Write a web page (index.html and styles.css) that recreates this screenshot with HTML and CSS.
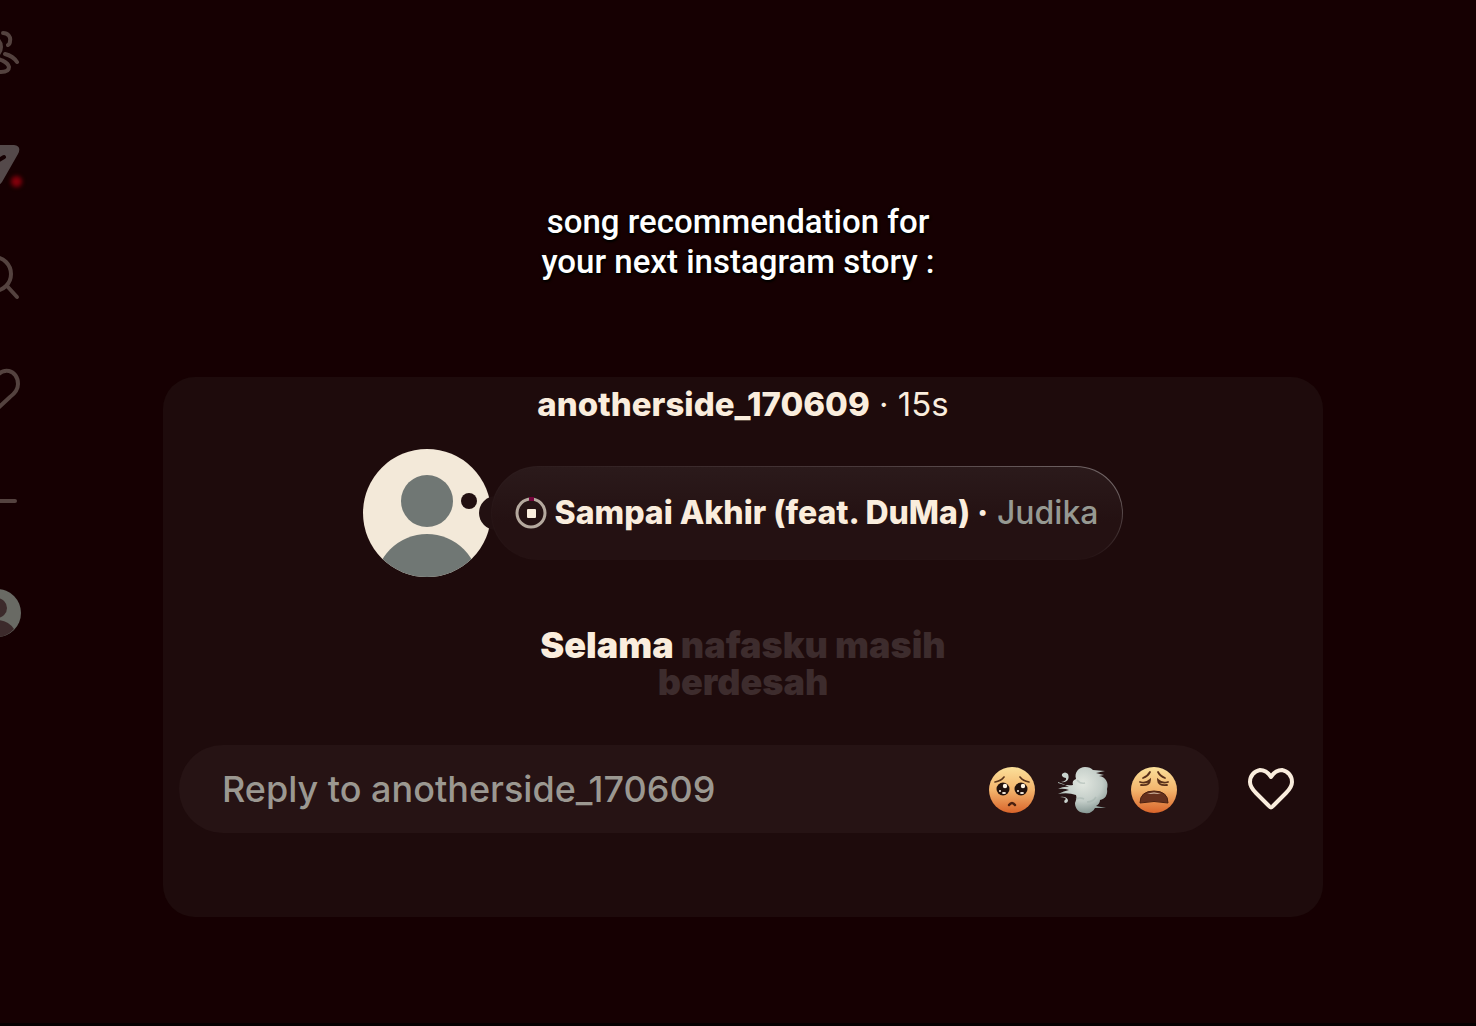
FILE: index.html
```
<!DOCTYPE html>
<html lang="en">

<head>
    <meta charset="UTF-8">
    <meta name="viewport" content="width=device-width, initial-scale=1.0">
    <title>Story</title>
    <link rel="stylesheet" href="styles.css">
</head>

<body>
    <nav class="rail">
        <a href="#" class="rail-link" aria-label="Friends">
            <svg viewBox="0 0 48 48" class="line-icon">
                <circle cx="18" cy="19" r="10" />
                <path d="M30 5c5 0 8 4 7 8q0 3-2 4M32 26q8 2 12 8M3 40c3-7 9-10 15-10 8 0 17 4 18 9 0 5-5 5-8 5H8c-4 0-6-1-5-4Z" />
            </svg>
        </a>
        <a href="#" class="rail-link" aria-label="Messages">
            <svg viewBox="0 0 48 48">
                <path class="plane" d="M7 5h34q8 1 4 9L29 42q-4 6-7-1l-4-15L4 13Q0 6 7 5Z" />
                <path class="plane-fold" d="M18 25l13-8" />
            </svg>
            <span class="dot"></span>
        </a>
        <a href="#" class="rail-link" aria-label="Search">
            <svg viewBox="0 0 48 48" class="line-icon">
                <circle cx="21" cy="22" r="17" />
                <path d="M34 34l10 11" />
            </svg>
        </a>
        <a href="#" class="rail-link" aria-label="Likes">
            <svg viewBox="0 0 48 48" class="line-icon">
                <path d="M24 12C20 7 16 6 12 7 5 8 1 14 2 21c1 6 5 9 9 13l13 11 13-12c4-3 8-7 8-13 0-7-4-12-9-13-5-1-9 1-12 5Z" />
            </svg>
        </a>
        <a href="#" class="rail-link" aria-label="Menu">
            <svg viewBox="0 0 48 48" class="line-icon">
                <path d="M7 25h35" />
            </svg>
        </a>
        <a href="#" class="rail-link" aria-label="Profile">
            <svg viewBox="0 0 48 48">
                <circle class="mini-bg" cx="24" cy="25" r="24" />
                <circle class="mini-fg" cx="24" cy="20" r="10" />
                <path class="mini-fg" d="M6 41q7-9 18-9t17 9q-7 8-17 8T6 41Z" />
            </svg>
        </a>
    </nav>

    <main class="story">
        <h1 class="caption">song recommendation for<br>your next instagram story :</h1>

        <section class="card">
            <p class="author"><strong>anotherside_170609</strong> · 15s</p>

            <div class="music">
                <svg class="avatar" viewBox="0 0 128 128">
                    <clipPath id="round">
                        <circle cx="64" cy="64" r="64" />
                    </clipPath>
                    <g clip-path="url(#round)">
                        <rect class="avatar-bg" width="128" height="128" />
                        <circle class="avatar-fg" cx="64" cy="52" r="26" />
                        <circle class="avatar-fg" cx="64" cy="137" r="52" />
                    </g>
                    <circle class="bubble" cx="106" cy="52" r="8" />
                    <circle class="bubble" cx="133" cy="64" r="17" />
                </svg>
                <div class="track">
                    <svg class="disc" viewBox="0 0 32 32">
                        <circle class="disc-ring" cx="16" cy="16" r="14" />
                        <path class="disc-mark" d="M14 2h5" />
                        <rect class="disc-stop" x="12" y="12" width="9" height="9" rx="1" />
                    </svg>
                    <p class="track-name"><strong>Sampai Akhir (feat. DuMa) ·</strong> Judika</p>
                </div>
            </div>

            <p class="lyrics"><span class="sung">Selama</span> nafasku masih<br>berdesah</p>

            <form class="reply">
                <div class="reply-box">
                    <input type="text" class="reply-input" aria-label="Reply" placeholder="Reply to anotherside_170609">
                    <button type="button" class="emoji" aria-label="Pleading face">
                        <svg viewBox="0 0 48 48">
                            <defs>
                                <linearGradient id="face" x1="0" y1="0" x2="0" y2="1">
                                    <stop offset="0" stop-color="#fbe09a" />
                                    <stop offset=".5" stop-color="#f3b46c" />
                                    <stop offset="1" stop-color="#d9642a" />
                                </linearGradient>
                            </defs>
                            <circle cx="24" cy="25" r="23" fill="url(#face)" />
                            <circle cx="15" cy="24" r="6.5" fill="#20110d" />
                            <circle cx="33" cy="24" r="6.5" fill="#20110d" />
                            <g fill="#fff6e6">
                                <circle cx="17" cy="21" r="2.2" />
                                <circle cx="35" cy="21" r="2.2" />
                                <circle cx="12" cy="26" r="1" />
                                <circle cx="30" cy="26" r="1" />
                                <ellipse cx="16" cy="28" rx="2" ry="1" />
                                <ellipse cx="34" cy="28" rx="2" ry="1" />
                            </g>
                            <path d="M7 17q6-1 9-5M41 17q-6-1-9-5" fill="none" stroke="#59341a" stroke-width="1.6" stroke-linecap="round" />
                            <path d="M21 40q3-4 6 0" fill="none" stroke="#4a2010" stroke-width="2.5" stroke-linecap="round" />
                        </svg>
                    </button>
                    <button type="button" class="emoji" aria-label="Dashing away">
                        <svg viewBox="0 0 48 48">
                            <defs>
                                <radialGradient id="puff" cx=".5" cy=".35" r=".65">
                                    <stop offset="0" stop-color="#e2e7e0" />
                                    <stop offset=".6" stop-color="#c3cdc8" />
                                    <stop offset="1" stop-color="#879894" />
                                </radialGradient>
                            </defs>
                            <path d="M-1 18q8 3 15 2c-1-3 0-5 3-6-2-7 3-12 9-12 4 0 6 1 8 3l12 1-9 2 8 2-5 1c7 1 10 7 8 13 1 6-2 10-7 11 0 3-2 5-4 6l10 2H36c-2 4-6 6-10 5-6 0-10-4-10-10 1-3 2-5 1-8q-8-3-18-1 6-3 11-4-5-2-11-1 6-3 11-2-5-3-11-5Z" fill="url(#puff)" />
                            <path d="M2 17q6-1 5-4-5-1-4-4 3-3 6 0c2 5-1 9-7 8ZM1 32q5 0 6 2-3 2-1 4 3 0 3-3-2-4-8-3Z" fill="#c9d3ce" />
                            <path d="M18 15q3 4 8 3M37 32q-3 5-9 5M17 34q4-2 8 0" fill="none" stroke="#a0afaa" stroke-width="1.5" opacity=".5" />
                        </svg>
                    </button>
                    <button type="button" class="emoji" aria-label="Weary face">
                        <svg viewBox="0 0 48 48">
                            <circle cx="24" cy="25" r="23" fill="url(#face)" />
                            <g fill="none" stroke="#59301a" stroke-width="1.8" stroke-linecap="round">
                                <path d="M13 13q5-2 7-6M35 13q-5-2-7-6" />
                                <path d="M10 17q6 2 10-2 0 6-9 5M38 17q-6 2-10-2 0 6 9 5" />
                            </g>
                            <path d="M10 38q0-12 14-12t14 12q-14-3-28 0Z" fill="#65301d" stroke="#4a2010" stroke-width="1" stroke-linejoin="round" />
                            <path d="M17 29q7-3 14 0-7-1-14 0Z" fill="#ead5bd" />
                        </svg>
                    </button>
                </div>
                <button type="button" class="like" aria-label="Like">
                    <svg viewBox="0 0 46 42">
                        <path d="M23 9C20 4 16 2 12 2 6 3 2 8 2 14c0 5 3 8 6 11l13 13q2 3 4 0l13-13c3-3 6-6 6-11 0-6-4-11-10-12-4 0-8 2-11 7Z" />
                    </svg>
                </button>
            </form>
        </section>
    </main>
</body>

</html>
```
FILE: styles.css
```
* {
    box-sizing: border-box;
}

body {
    display: flex;
    min-height: 100vh;
    margin: 0;
    overflow: hidden;
    background: #160002;
    border-bottom: 3px solid #060001;
    color: #faeddd;
    font-family: Inter, "Liberation Sans", sans-serif;
}

h1,
p {
    margin: 0;
}

strong {
    font-weight: 800;
}

button {
    padding: 0;
    border: none;
    background: none;
    cursor: pointer;
}

svg {
    display: block;
    overflow: visible;
}

/* Side rail, half tucked behind the left edge */
.rail {
    display: flex;
    flex-direction: column;
    align-items: flex-end;
    gap: 64px;
    width: 24px;
    padding: 28px 3px 0 0;
}

.rail-link {
    position: relative;
    width: 48px;
    height: 48px;
}

.line-icon {
    fill: none;
    stroke: #54423f;
    stroke-width: 4;
    stroke-linecap: round;
    stroke-linejoin: round;
}

.plane {
    fill: #54494a;
}

.plane-fold {
    stroke: #160002;
    stroke-width: 4;
    stroke-linecap: round;
}

.dot {
    position: absolute;
    right: -1px;
    bottom: 1px;
    width: 11px;
    height: 11px;
    border-radius: 50%;
    background: #82000b;
    filter: blur(2px);
}

.mini-bg {
    fill: #696a64;
}

.mini-fg {
    fill: #3c2a2b;
}

.story {
    flex: 1;
    padding: 202px 153px 40px 139px;
}

.caption {
    margin: 0 10px 95px 0;
    color: #fff;
    font-family: Roboto, "Liberation Sans", sans-serif;
    font-size: 33px;
    font-weight: 500;
    line-height: 40px;
    text-align: center;
    text-shadow: 0 0 3px #000, 1px 2px 2px #000;
}

.card {
    padding: 7px 16px 84px;
    border-radius: 32px;
    background: #1e0b0c;
}

.author {
    margin-bottom: 25px;
    font-size: 33px;
    line-height: 40px;
    text-align: center;
}

.music {
    display: flex;
    align-items: center;
    justify-content: center;
    margin-bottom: 50px;
}

.avatar {
    width: 128px;
    height: 128px;
}

.avatar-bg {
    fill: #f3e9d9;
}

.avatar-fg {
    fill: #707774;
}

.bubble {
    fill: #221011;
}

/* the border only catches light around the top right corner */
.track {
    display: flex;
    align-items: center;
    gap: 8px;
    height: 94px;
    padding: 0 24px 0 23px;
    border: 1px solid transparent;
    border-radius: 47px;
    background:
        linear-gradient(#2b1a1b, #241112 60%) padding-box,
        linear-gradient(#0000 20%, #241112) border-box,
        linear-gradient(90deg, #2a191a, #4a3a3c 60%, #75696a) border-box;
}

.disc {
    width: 32px;
    height: 32px;
}

.disc-ring {
    fill: none;
    stroke: #b5a99e;
    stroke-width: 3;
}

.disc-mark {
    stroke: #74053c;
    stroke-width: 4;
}

.disc-stop {
    fill: #faeddd;
}

.track-name {
    color: #969992;
    font-size: 32px;
    font-weight: 500;
    line-height: 40px;
}

.track-name strong {
    color: #faeddd;
}

.lyrics {
    margin-bottom: 44px;
    color: #3d2c2d;
    font-size: 36px;
    font-weight: 900;
    line-height: 37px;
    text-align: center;
}

.sung {
    color: #faeddd;
}

.reply {
    display: flex;
    align-items: center;
    gap: 29px;
    padding-right: 13px;
}

.reply-box {
    display: flex;
    flex: 1;
    align-items: center;
    gap: 23px;
    min-width: 0;
    height: 88px;
    padding: 0 41px 0 43px;
    border-radius: 44px;
    background: #261314;
}

.reply-input {
    flex: 1;
    min-width: 0;
    padding: 0;
    border: none;
    outline: none;
    background: none;
    color: #faeddd;
    font-family: inherit;
    font-size: 36px;
    font-weight: 500;
    line-height: 44px;
}

.reply-input::placeholder {
    color: #9b9891;
    opacity: 1;
}

.emoji svg {
    width: 48px;
    height: 48px;
}

.like svg {
    width: 46px;
    height: 42px;
    fill: none;
    stroke: #faeddd;
    stroke-width: 4;
    stroke-linejoin: round;
}
```
